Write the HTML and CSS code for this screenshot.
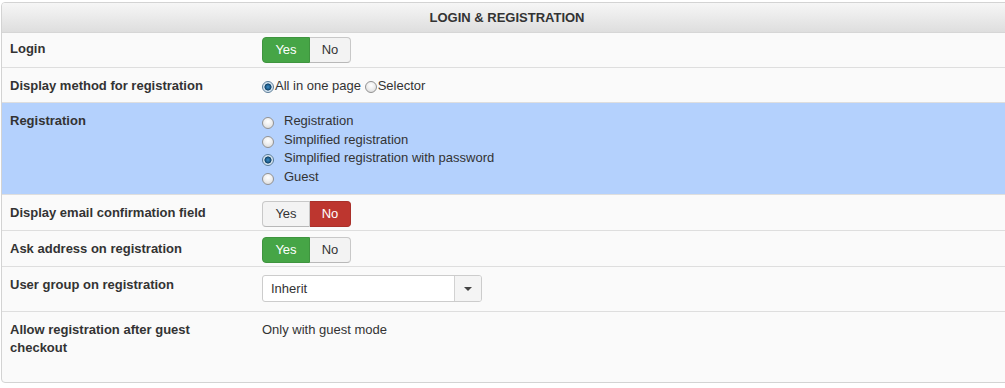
FILE: index.html
```html
<!DOCTYPE html>
<html>
<head>
<meta charset="utf-8">
<link rel="stylesheet" href="styles.css">
</head>
<body>
<div class="panel">
  <div class="panel-head">LOGIN &amp; REGISTRATION</div>

  <div class="row row-toggle row-first">
    <div class="label label-toggle">Login</div>
    <div class="value">
      <div class="toggle"><span class="btn btn-yes active-yes">Yes</span><span class="btn btn-no">No</span></div>
    </div>
  </div>

  <div class="row row-text">
    <div class="label">Display method for registration</div>
    <div class="value">
      <span class="radio checked inline-radio"></span>All in one page <span class="radio inline-radio"></span>Selector
    </div>
  </div>

  <div class="row row-text row-highlight">
    <div class="label">Registration</div>
    <div class="value">
      <div class="radio-line"><span class="radio"></span>Registration</div>
      <div class="radio-line"><span class="radio"></span>Simplified registration</div>
      <div class="radio-line"><span class="radio checked"></span>Simplified registration with password</div>
      <div class="radio-line"><span class="radio"></span>Guest</div>
    </div>
  </div>

  <div class="row row-toggle">
    <div class="label label-toggle">Display email confirmation field</div>
    <div class="value">
      <div class="toggle"><span class="btn btn-yes">Yes</span><span class="btn btn-no active-no">No</span></div>
    </div>
  </div>

  <div class="row row-toggle">
    <div class="label label-toggle">Ask address on registration</div>
    <div class="value">
      <div class="toggle"><span class="btn btn-yes active-yes">Yes</span><span class="btn btn-no">No</span></div>
    </div>
  </div>

  <div class="row row-select">
    <div class="label label-select">User group on registration</div>
    <div class="value">
      <div class="select"><span class="select-text">Inherit</span><span class="select-arrow"><span class="caret"></span></span></div>
    </div>
  </div>

  <div class="row row-text row-last">
    <div class="label">Allow registration after guest checkout</div>
    <div class="value">Only with guest mode</div>
  </div>
</div>
</body>
</html>
```

FILE: styles.css
```css
* { box-sizing: border-box; }

html, body { background: #fff; }

body {
  margin: 0;
  padding: 2px 0 0 1px;
  font-family: "Liberation Sans", Arial, Helvetica, sans-serif;
  font-size: 13px;
  color: #333;
  overflow: hidden;
}

.panel {
  width: 1012px;
  height: 381px;
  border: 1px solid #d3d3d3;
  border-radius: 4px;
  background: #fafafa;
  overflow: hidden;
}

.panel-head {
  height: 30px;
  line-height: 29px;
  text-align: center;
  font-weight: bold;
  color: #333;
  background: linear-gradient(#f6f6f6, #dedede);
  border-bottom: 1px solid #d6d6d6;
}

.row {
  display: flex;
  align-items: flex-start;
  border-bottom: 1px solid #dedede;
}

.label {
  width: 260px;
  flex: none;
  padding: 0 30px 0 8px;
  font-weight: bold;
  line-height: 18px;
  color: #333;
}

.label-toggle { padding-top: 3px; }
.label-select { padding-top: 1px; }

.value {
  flex: 1;
  line-height: 18px;
  color: #333;
}

.row-toggle { padding: 6px 0 3px; }
.row-first.row-toggle { padding: 4px 0 4px; }
.row-text { padding: 9px 0 7px; }
.row-highlight { background: #b4d1fd; padding: 9px 0 8px; }
.row-select { padding: 8px 0 9px; }
.row-last { border-bottom: none; padding: 9px 0 25px; }

/* toggle buttons */
.toggle {
  display: inline-flex;
  height: 26px;
}

.btn {
  display: inline-block;
  height: 26px;
  line-height: 24px;
  text-align: center;
  background: #f3f3f3;
  border: 1px solid #c8c8c8;
  border-bottom-color: #b8b8b8;
  color: #333;
}

.btn-yes {
  width: 48px;
  border-radius: 4px 0 0 4px;
}

.btn-no {
  width: 41px;
  border-left: none;
  border-radius: 0 4px 4px 0;
}

.active-yes {
  background: #46a546;
  border-color: #3f943f;
  color: #fff;
}

.active-no {
  background: #bd362f;
  border-color: #a9302a;
  color: #fff;
}

/* radios */
.radio {
  display: inline-block;
  width: 12px;
  height: 12px;
  border-radius: 50%;
  border: 1px solid #929292;
  background: radial-gradient(circle at 50% 35%, #ffffff 0, #f1f1f1 40%, #d5d5d5 100%);
  box-sizing: border-box;
}

.radio.checked {
  border-color: #5a7c98;
  background: radial-gradient(circle at 50% 50%, #3d8cc4 0, #1f5f8e 2.2px, #0f3c5f 3.2px, #c4d8e8 3.8px, #ffffff 6px);
}

.inline-radio {
  vertical-align: -3px;
  margin-right: 1px;
}

.radio-line {
  height: 18.5px;
  line-height: 18px;
}

.radio-line .radio {
  vertical-align: -4px;
  margin-right: 10px;
}

/* select */
.select {
  display: flex;
  width: 220px;
  height: 27px;
  border: 1px solid #cccccc;
  border-radius: 3px;
  background: #fff;
  overflow: hidden;
}

.select-text {
  flex: 1;
  padding-left: 8px;
  line-height: 25px;
  color: #333;
}

.select-arrow {
  width: 27px;
  flex: none;
  border-left: 1px solid #d2d2d2;
  background: #f4f4f4;
  display: flex;
  align-items: center;
  justify-content: center;
}

.caret {
  width: 0;
  height: 0;
  border-left: 4px solid transparent;
  border-right: 4px solid transparent;
  border-top: 4px solid #444;
  margin-top: 1px;
}
```
